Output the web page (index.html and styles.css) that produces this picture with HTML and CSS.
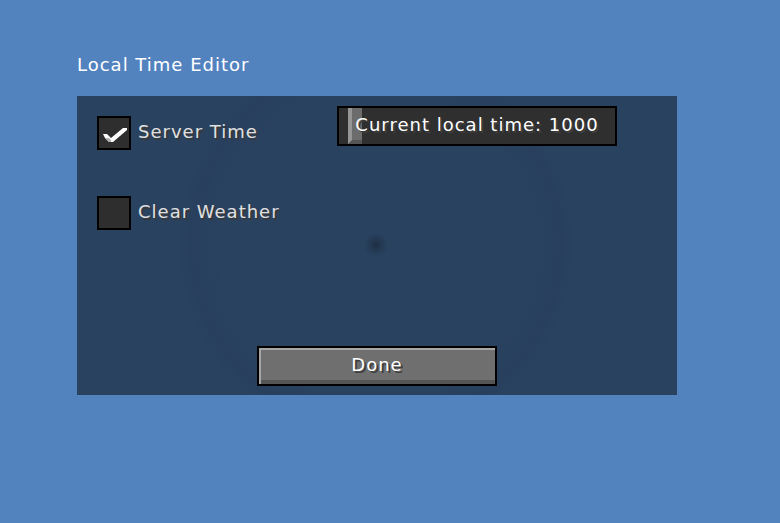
FILE: index.html
```html
<!DOCTYPE html>
<html>
<head>
<meta charset="utf-8">
<title>Local Time Editor</title>
<link rel="stylesheet" href="styles.css">
</head>
<body>
<div class="screen">
  <div class="title">Local Time Editor</div>
  <div class="panel">
    <div class="top">
      <div class="options">
        <div class="option">
          <span class="box">
            <svg class="check" width="24" height="18" viewBox="0 0 24 18">
              <polygon points="0,8 4,8 8,12 20,2 24,2 24,4 10,16 6,16 2,12" fill="#ffffff"/>
              <polygon points="2,12 6,12 8,14 8,16 6,16" fill="#b0b0b0"/>
            </svg>
          </span>
          <span class="label">Server Time</span>
        </div>
        <div class="option">
          <span class="box"></span>
          <span class="label">Clear Weather</span>
        </div>
      </div>
      <div class="slider">
        <span class="handle"></span>
        <span class="slider-text">Current local time: 1000</span>
      </div>
    </div>
    <div class="btn"><span class="btn-text">Done</span></div>
  </div>
</div>
</body>
</html>
```
FILE: styles.css
```css
html, body {
  margin: 0;
  padding: 0;
}
body {
  width: 780px;
  height: 523px;
  background: #5283bf;
  font-family: "DejaVu Sans", sans-serif;
  font-size: 18px;
  letter-spacing: 1px;
  color: #fff;
  overflow: hidden;
}
.screen {
  padding: 52px 0 0 77px;
}
.title {
  height: 44px;
  line-height: 26px;
  color: #ffffff;
}
.panel {
  width: 600px;
  height: 299px;
  background:
    radial-gradient(circle at 299px 149px, rgba(20,30,45,0.55) 0, rgba(20,30,45,0.25) 6px, rgba(20,30,45,0) 12px),
    radial-gradient(circle at 299px 149px, rgba(0,0,0,0) 150px, rgba(0,0,0,0.03) 185px, rgba(0,0,0,0) 200px),
    #294260;
  display: flex;
  flex-direction: column;
  box-sizing: border-box;
  padding: 10px 0 9px 20px;
}
.top {
  display: flex;
}
.options {
  width: 240px;
  padding-top: 10px;
  display: flex;
  flex-direction: column;
  gap: 46px;
}
.option {
  display: flex;
  align-items: center;
  gap: 7px;
  height: 34px;
}
.box {
  width: 34px;
  height: 34px;
  box-sizing: border-box;
  border: 2px solid #000;
  background: #2e2e2e;
  display: flex;
  align-items: center;
  justify-content: center;
}
.check {
  margin-top: 3px;
  margin-left: 1px;
}
.label {
  color: #e0e0e0;
  text-shadow: 2px 2px 0 #383838;
  margin-top: -4px;
  white-space: nowrap;
}
.slider {
  position: relative;
  width: 280px;
  height: 40px;
  box-sizing: border-box;
  border: 2px solid #000;
  background: #2f2f2f;
  display: flex;
  align-items: center;
  justify-content: center;
}
.handle {
  position: absolute;
  left: 9px;
  top: 0;
  width: 14px;
  height: 36px;
  box-sizing: border-box;
  background: #6c6c6c;
  border-left: 4px solid #969696;
  border-bottom: 4px solid #555555;
}
.slider-text {
  position: relative;
  color: #ffffff;
  text-shadow: 2px 2px 0 #3e3e3e;
  margin-top: -3px;
  white-space: nowrap;
}
.btn {
  margin-top: auto;
  align-self: center;
  margin-left: -20px;
  width: 240px;
  height: 40px;
  box-sizing: border-box;
  border: 2px solid #000;
  background: #6f6f6f;
  box-shadow: inset 2px 2px 0 #a6a6a6, inset 0 -4px 0 #555555;
  display: flex;
  align-items: center;
  justify-content: center;
}
.btn-text {
  color: #ffffff;
  text-shadow: 2px 2px 0 #3e3e3e;
  margin-top: -3px;
}
```
